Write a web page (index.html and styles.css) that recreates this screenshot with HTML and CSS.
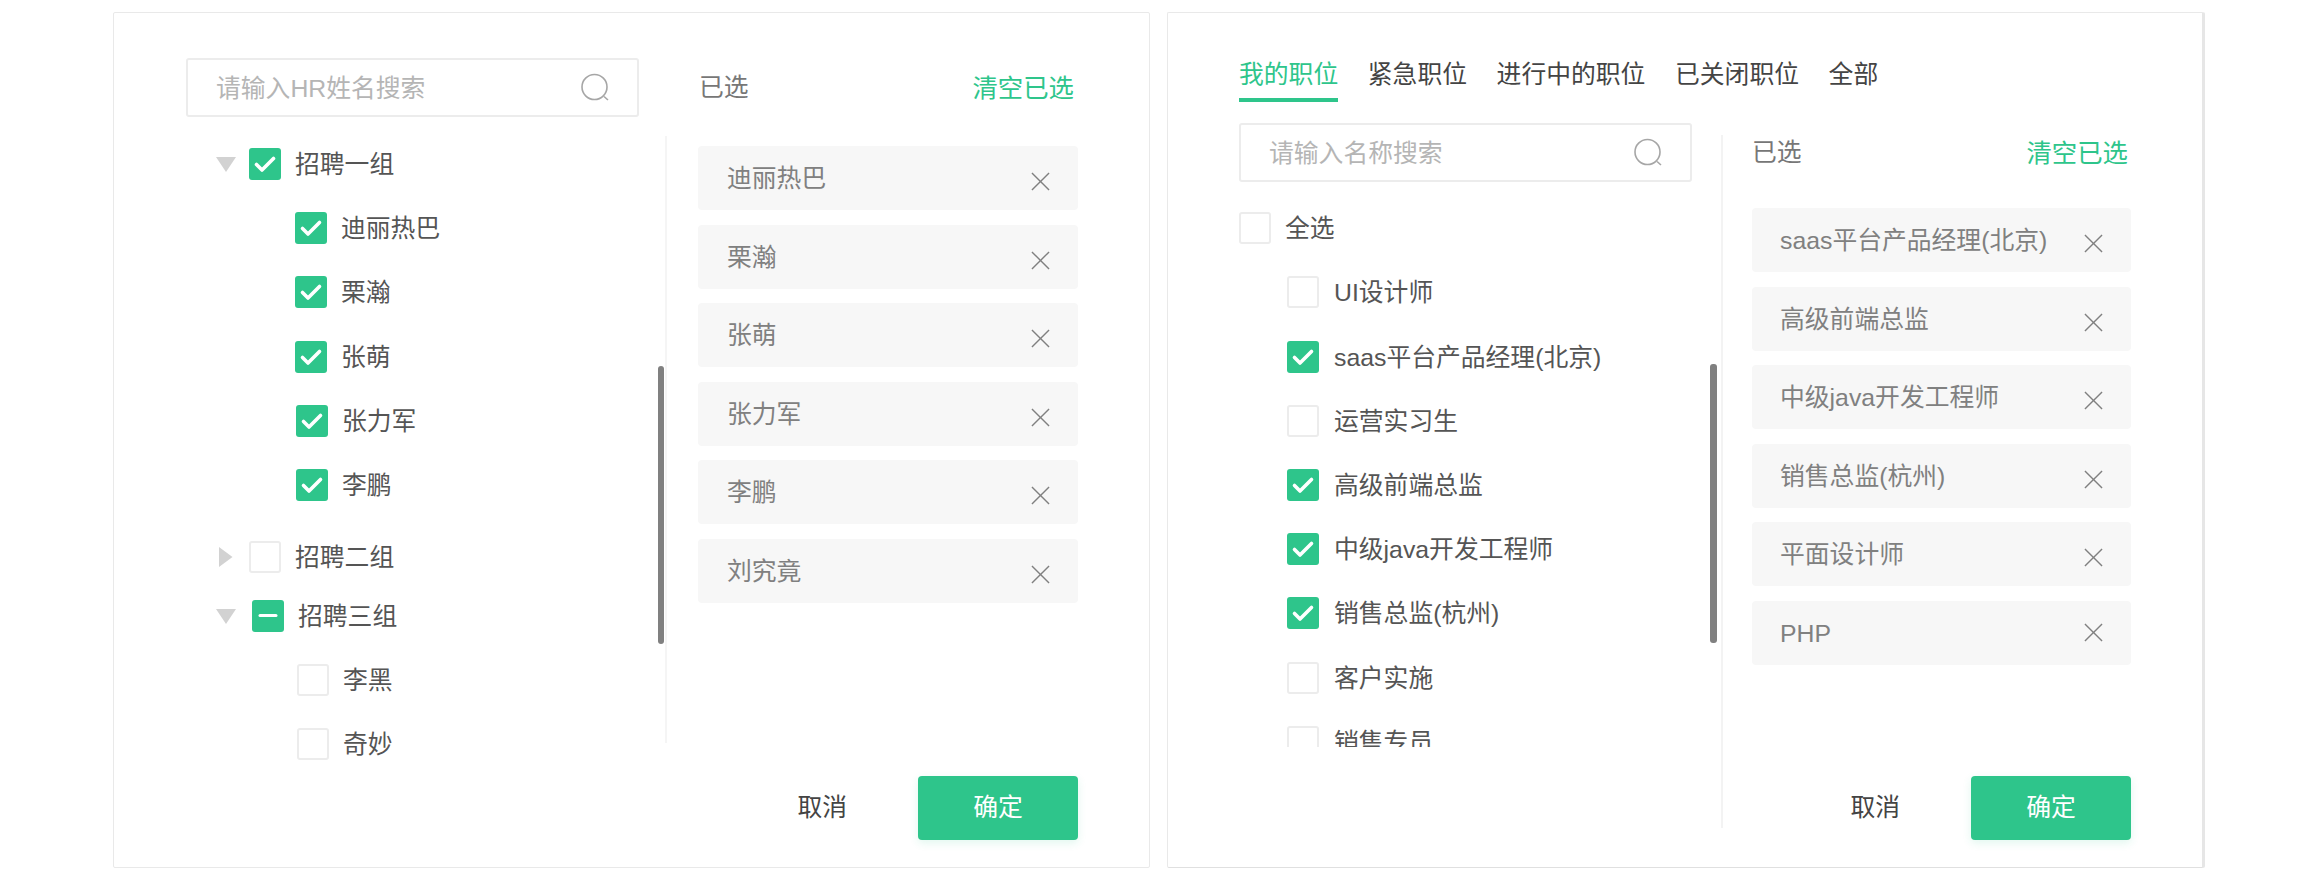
FILE: index.html
```html
<!DOCTYPE html>
<html lang="zh-CN">
<head>
<meta charset="utf-8">
<title>选择弹窗</title>
<link rel="stylesheet" href="styles.css">
</head>
<body>
<svg class="sprite" aria-hidden="true">
  <symbol id="i-check" viewBox="0 0 32 32"><path d="M7.5 16.5l5.5 5.5L24.5 10.5" fill="none" stroke="#fff" stroke-width="3.6" stroke-linecap="round" stroke-linejoin="round"/></symbol>
  <symbol id="i-minus" viewBox="0 0 32 32"><path d="M8 15.5h16" fill="none" stroke="#fff" stroke-width="3" stroke-linecap="round"/></symbol>
  <symbol id="i-search" viewBox="0 0 30 30"><circle cx="14.5" cy="14" r="12.5" fill="none" stroke="#a6a6a6" stroke-width="1.6"/><path d="M24 23.5l4 3.5" fill="none" stroke="#a6a6a6" stroke-width="1.6"/></symbol>
  <symbol id="i-close" viewBox="0 0 20 20"><path d="M1 1l18 18M19 1L1 19" fill="none" stroke="#808080" stroke-width="1.5"/></symbol>
  <symbol id="i-down" viewBox="0 0 20 15"><path d="M0 0h20L10 15z" fill="#d2d2d2"/></symbol>
  <symbol id="i-right" viewBox="0 0 20 20"><path d="M3 0l13.5 10L3 20z" fill="#d2d2d2"/></symbol>
</svg>

<main class="stage">
  <section class="card">
    <div class="top">
      <div class="search"><span class="ph">请输入HR姓名搜索</span><svg class="ico-search"><use href="#i-search"/></svg></div>
      <div class="head head-a"><span class="head-label">已选</span><a class="clear">清空已选</a></div>
    </div>
    <div class="body">
      <div class="tree">
        <div class="row"><svg class="arrow"><use href="#i-down"/></svg><span class="cb on"><svg><use href="#i-check"/></svg></span><span class="txt">招聘一组</span></div>
        <div class="row child"><span class="cb on"><svg><use href="#i-check"/></svg></span><span class="txt">迪丽热巴</span></div>
        <div class="row child"><span class="cb on"><svg><use href="#i-check"/></svg></span><span class="txt">栗瀚</span></div>
        <div class="row child nudge"><span class="cb on"><svg><use href="#i-check"/></svg></span><span class="txt">张萌</span></div>
        <div class="row child child-b"><span class="cb on"><svg><use href="#i-check"/></svg></span><span class="txt">张力军</span></div>
        <div class="row child child-b"><span class="cb on"><svg><use href="#i-check"/></svg></span><span class="txt">李鹏</span></div>
        <div class="row sp-wide"><svg class="arrow arrow-r"><use href="#i-right"/></svg><span class="cb"></span><span class="txt">招聘二组</span></div>
        <div class="row sp-tight"><svg class="arrow"><use href="#i-down"/></svg><span class="cb on shift"><svg><use href="#i-minus"/></svg></span><span class="txt">招聘三组</span></div>
        <div class="row child child-c"><span class="cb"></span><span class="txt">李黑</span></div>
        <div class="row child child-c"><span class="cb"></span><span class="txt">奇妙</span></div>
      </div>
      <div class="sel">
        <ul class="items">
          <li class="item"><span>迪丽热巴</span><svg class="x"><use href="#i-close"/></svg></li>
          <li class="item"><span>栗瀚</span><svg class="x"><use href="#i-close"/></svg></li>
          <li class="item"><span>张萌</span><svg class="x"><use href="#i-close"/></svg></li>
          <li class="item"><span>张力军</span><svg class="x"><use href="#i-close"/></svg></li>
          <li class="item"><span>李鹏</span><svg class="x"><use href="#i-close"/></svg></li>
          <li class="item"><span>刘究竟</span><svg class="x"><use href="#i-close"/></svg></li>
        </ul>
      </div>
    </div>
    <div class="foot foot-a"><button class="btn-text">取消</button><button class="btn-ok">确定</button></div>
    <div class="thumb thumb-a"></div>
  </section>

  <section class="card card-b">
    <nav class="tabs">
      <a class="tab active">我的职位</a>
      <a class="tab">紧急职位</a>
      <a class="tab">进行中的职位</a>
      <a class="tab">已关闭职位</a>
      <a class="tab">全部</a>
    </nav>
    <div class="body-b">
      <div class="col-list">
        <div class="search"><span class="ph">请输入名称搜索</span><svg class="ico-search"><use href="#i-search"/></svg></div>
        <div class="list">
          <div class="row"><span class="cb"></span><span class="txt">全选</span></div>
          <div class="row child-l"><span class="cb"></span><span class="txt">UI设计师</span></div>
          <div class="row child-l nudge"><span class="cb on"><svg><use href="#i-check"/></svg></span><span class="txt">saas平台产品经理(北京)</span></div>
          <div class="row child-l"><span class="cb"></span><span class="txt">运营实习生</span></div>
          <div class="row child-l"><span class="cb on"><svg><use href="#i-check"/></svg></span><span class="txt">高级前端总监</span></div>
          <div class="row child-l"><span class="cb on"><svg><use href="#i-check"/></svg></span><span class="txt">中级java开发工程师</span></div>
          <div class="row child-l"><span class="cb on"><svg><use href="#i-check"/></svg></span><span class="txt">销售总监(杭州)</span></div>
          <div class="row child-l nudge"><span class="cb"></span><span class="txt">客户实施</span></div>
          <div class="row child-l"><span class="cb"></span><span class="txt">销售专员</span></div>
        </div>
      </div>
      <div class="sel-b">
        <div class="head head-b"><span class="head-label">已选</span><a class="clear">清空已选</a></div>
        <ul class="items items-b">
          <li class="item"><span>saas平台产品经理(北京)</span><svg class="x"><use href="#i-close"/></svg></li>
          <li class="item"><span>高级前端总监</span><svg class="x"><use href="#i-close"/></svg></li>
          <li class="item"><span>中级java开发工程师</span><svg class="x"><use href="#i-close"/></svg></li>
          <li class="item"><span>销售总监(杭州)</span><svg class="x"><use href="#i-close"/></svg></li>
          <li class="item"><span>平面设计师</span><svg class="x"><use href="#i-close"/></svg></li>
          <li class="item"><span>PHP</span><svg class="x x-c"><use href="#i-close"/></svg></li>
        </ul>
        <div class="foot foot-b"><button class="btn-text">取消</button><button class="btn-ok">确定</button></div>
      </div>
    </div>
    <div class="thumb thumb-b"></div>
  </section>
</main>
</body>
</html>
```

FILE: styles.css
```css
* { box-sizing: border-box; }
html, body { margin: 0; height: 100%; overflow: hidden; background: #fff; }
body {
  font-family: "Liberation Sans", "Noto Sans CJK SC", sans-serif;
  font-size: 24.8px;
  line-height: 32px;
  color: #555;
}
.sprite { position: absolute; width: 0; height: 0; overflow: hidden; }
ul { list-style: none; margin: 0; padding: 0; }
button { font: inherit; border: 0; padding: 0; background: none; }

.stage { display: flex; gap: 17px; padding: 12px 0 0 113px; }
.card {
  position: relative;
  width: 1037px;
  height: 856px;
  border: 1px solid #e9e9e9;
  border-radius: 2px;
  background: #fff;
  flex: none;
}
.card-b { width: 1038px; border-right: 3px solid #e6e6e6; border-bottom-color: #e0e0e0; }

/* search box */
.search {
  display: flex;
  align-items: center;
  justify-content: space-between;
  width: 453px;
  height: 59px;
  padding: 0 27px 0 28px;
  border: 2px solid #ececec;
  border-radius: 3px;
  flex: none;
}
.ph { padding-top: 2px; color: #b5b5b5; }
.ico-search { width: 30px; height: 30px; flex: none; }

/* left card */
.top { display: flex; align-items: center; padding: 45px 0 0 72px; }
.head { display: flex; align-items: center; justify-content: space-between; }
.head-a { width: 375px; margin-left: 60px; }
.head-label { color: #777; }
.clear { color: #2ec58b; font-size: 25.4px; }
.body { display: flex; height: 607px; margin-top: 19px; }
.tree { width: 551px; padding: 12px 0 0 102px; flex: none; }
.sel { border-left: 2px solid #f5f5f5; padding: 10px 0 0 31px; flex: none; }

/* rows */
.row { display: flex; align-items: center; height: 32px; margin-top: 32px; }
.tree .row:first-child, .list .row:first-child { margin-top: 0; }
.child { padding-left: 79px; }
.child-b { padding-left: 80px; }
.child-c { padding-left: 81px; }
.child-l { padding-left: 48px; }
.nudge { margin-top: 33px; }
.sp-wide { margin-top: 40px; }
.sp-tight { margin-top: 27px; }
.arrow { width: 20px; height: 15px; margin-right: 13px; flex: none; }
.arrow-r { height: 20px; }
.cb {
  display: block;
  width: 32px;
  height: 32px;
  margin-right: 14px;
  border: 2px solid #ececec;
  border-radius: 3px;
  flex: none;
}
.child-l .cb { margin-right: 15px; }
.cb.on { background: #2ec58b; border: 0; }
.cb svg { display: block; width: 32px; height: 32px; }
.cb.shift { margin-left: 3px; }
.txt { padding-top: 2px; color: #555; white-space: nowrap; }

/* selected list */
.items { display: flex; flex-direction: column; gap: 14.6px; width: 380px; }
.item {
  display: flex;
  align-items: center;
  justify-content: space-between;
  height: 64px;
  padding: 0 28px 0 29px;
  border-radius: 4px;
  background: #f7f7f7;
  color: #808080;
  white-space: nowrap;
}
.item span { padding-top: 2px; }
.items-b .item { padding-left: 28px; }
.x { width: 19px; height: 19px; margin-top: 7px; flex: none; }
.x-c { margin-top: 0; }

/* footer */
.foot { display: flex; align-items: center; justify-content: flex-end; gap: 71px; }
.foot-a { margin-top: 33px; padding-right: 71px; }
.btn-text { color: #444; }
.btn-ok {
  width: 160px;
  height: 64px;
  border-radius: 4px;
  background: #2ec58b;
  color: #fff;
  box-shadow: 0 3px 8px rgba(46, 197, 139, .14);
}

/* right card */
.tabs { display: flex; gap: 29.6px; height: 89px; padding: 45px 0 0 71px; }
.tab { height: 44px; padding-top: 2px; color: #444; white-space: nowrap; border-bottom: 4px solid transparent; line-height: 30px; }
.tab.active { color: #2ec58b; border-bottom-color: #2ec58b; }
.body-b { display: flex; }
.col-list { width: 553px; padding: 21px 0 0 71px; flex: none; }
.list { height: 535px; margin-top: 30px; overflow: hidden; }
.sel-b { height: 693px; margin-top: 33px; padding-left: 29px; border-left: 2px solid #f3f3f3; flex: none; }
.head-b { width: 376px; height: 36px; }
.items-b { margin-top: 37px; width: 379px; gap: 14.5px; }
.foot-b { margin-top: 111px; width: 379px; }

/* overlay scrollbars */
.thumb { position: absolute; background: #808080; border-radius: 3px; }
.thumb-a { left: 544px; top: 353px; width: 6px; height: 278px; }
.thumb-b { left: 542px; top: 351px; width: 7px; height: 279px; }
```
